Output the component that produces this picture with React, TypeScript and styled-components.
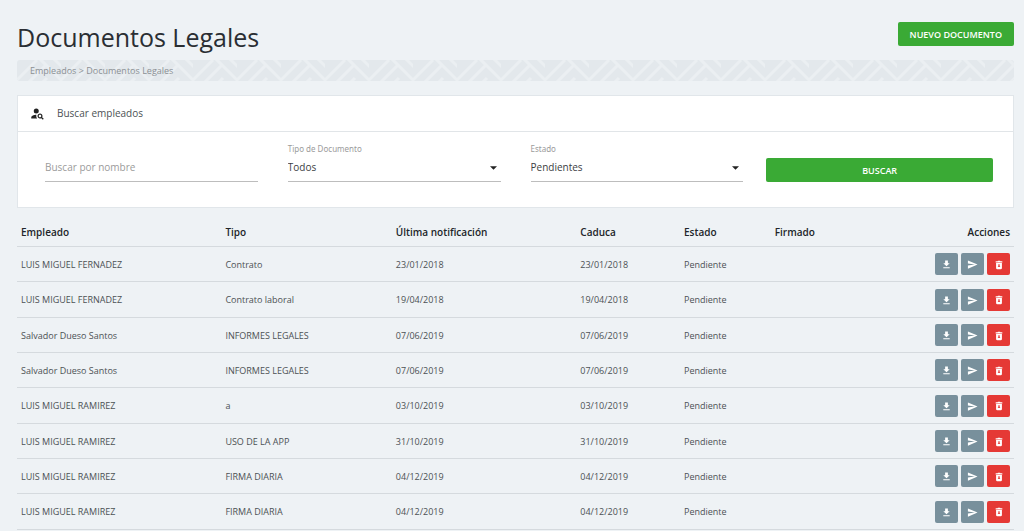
import React from "react";
import styled, { createGlobalStyle } from "styled-components";
import { MdDownload, MdSend, MdPersonSearch } from "react-icons/md";

const GlobalStyle = createGlobalStyle`
  *, *::before, *::after { box-sizing: border-box; }
  body {
    margin: 0;
    background: #eef2f5;
    color: #4c5154;
    font: 10px/15px "Segoe UI", "Open Sans", "Noto Sans", sans-serif;
    overflow-x: hidden;
  }
  button, input, select { font: inherit; color: inherit; }
`;

const Page = styled.main`
  padding: 22px 10px 0 17px;
`;

const PageHeader = styled.header`
  display: flex;
  justify-content: space-between;
  align-items: flex-start;
  height: 38px;
`;

const Title = styled.h1`
  margin: 0;
  color: #2a2e33;
  font-size: 25px;
  line-height: 30px;
  font-weight: 400;
`;

const PrimaryButton = styled.button<{ $wide?: boolean }>`
  height: 24px;
  width: ${(p) => (p.$wide ? "100%" : "auto")};
  padding: 0 12px;
  border: 0;
  border-radius: 2px;
  background: #3aaa35;
  color: #fff;
  font-size: 9px;
  font-weight: 600;
  cursor: pointer;
`;

const Breadcrumb = styled.nav`
  position: relative;
  height: 21px;
  border-radius: 3px;
  background: #e3e8ec;
  color: #8b9094;
  font-size: 9px;
  line-height: 21px;
  overflow: hidden;
`;

const Weave = styled.svg`
  position: absolute;
  inset: 0;
  width: 100%;
  height: 100%;
`;

const Trail = styled.div`
  position: relative;
  padding: 0 13px;
`;

const TrailLink = styled.a`
  color: inherit;
  text-decoration: none;
`;

const Card = styled.section`
  margin-top: 14px;
  background: #fff;
  border: 1px solid #e1e6ea;
`;

const CardHeader = styled.div`
  display: flex;
  align-items: center;
  gap: 12px;
  height: 36px;
  padding: 0 12px;
  border-bottom: 1px solid #e1e5e8;

  svg { color: #222; }
`;

const CardTitle = styled.h2`
  margin: 0;
  font-size: 10px;
  font-weight: 400;
`;

const Filters = styled.form`
  display: grid;
  grid-template-columns: repeat(4, 1fr);
  align-items: end;
  padding: 11px 12px 25px;
`;

const Field = styled.div`
  display: flex;
  flex-direction: column;
  padding: 0 15px;
`;

const FieldLabel = styled.label<{ $hidden?: boolean }>`
  color: #9b9b9b;
  font-family: "Segoe UI", "Noto Sans", sans-serif;
  font-size: 8px;
  line-height: 12px;
  visibility: ${(p) => (p.$hidden ? "hidden" : "visible")};
`;

const TextInput = styled.input`
  width: 100%;
  height: 27px;
  padding: 0 0 2px;
  border: 0;
  border-bottom: 1px solid #bdbdbd;
  background: transparent;
  outline: 0;

  &::placeholder { color: #9b9b9b; opacity: 1; }
`;

const SelectWrap = styled.div`
  display: grid;
  align-items: center;

  > * { grid-area: 1 / 1; }
  > svg { justify-self: end; margin: 0 4px 2px 0; pointer-events: none; }
`;

const Select = styled.select`
  width: 100%;
  height: 27px;
  padding: 0 0 2px;
  border: 0;
  border-bottom: 1px solid #bdbdbd;
  border-radius: 0;
  background: transparent;
  appearance: none;
  color: #3c4043;
`;

const SubmitCell = styled.div`
  display: flex;
  padding: 0 8px;
`;

const Table = styled.table`
  width: 100%;
  margin-top: 9px;
  border-collapse: collapse;
  table-layout: fixed;
`;

const Col = styled.col<{ $share: number }>`
  width: ${(p) => p.$share}%;
`;

const Row = styled.tr`
  height: 35px;
  font-size: 9px;
  &:nth-child(3n + 2) { height: 36px; }
`;

const Th = styled.th<{ $end?: boolean }>`
  height: 29px;
  padding: 2px 4px 0;
  border-bottom: 1px solid #d5dade;
  color: #212529;
  font-weight: 600;
  text-align: ${(p) => (p.$end ? "right" : "left")};
`;

const Td = styled.td`
  padding: 1px 4px 0;
  border-bottom: 1px solid #d5dade;
`;

const Actions = styled.div`
  display: flex;
  justify-content: flex-end;
  gap: 3px;
`;

const IconButton = styled.button<{ $danger?: boolean }>`
  display: flex;
  align-items: center;
  justify-content: center;
  flex: none;
  width: 23px;
  height: 22px;
  padding: 1px 0 0;
  border: 0;
  border-radius: 2px;
  background: ${(p) => (p.$danger ? "#e53935" : "#78909c")};
  color: #fff;
  cursor: pointer;
`;

const TrashIcon = () => (
  <svg width="10" height="10" viewBox="0 0 24 24" fill="currentColor" aria-hidden="true">
    <path
      fillRule="evenodd"
      d="M4 3h4.5l1-1h5l1 1H20v3H4zM5 7h14v12a3 3 0 0 1-3 3H8a3 3 0 0 1-3-3zm4 4l2 2-2 2 1 2 2-1 2 1 1-2-2-2 2-2z"
    />
  </svg>
);

const Caret = () => (
  <svg width="7" height="4" viewBox="0 0 8 4" aria-hidden="true">
    <path d="M0 0h8L4 4z" fill="#222" />
  </svg>
);

type Doc = [employee: string, kind: string, notified: string];

const docs: Doc[] = [
  ["LUIS MIGUEL FERNADEZ", "Contrato", "23/01/2018"],
  ["LUIS MIGUEL FERNADEZ", "Contrato laboral", "19/04/2018"],
  ["Salvador Dueso Santos", "INFORMES LEGALES", "07/06/2019"],
  ["Salvador Dueso Santos", "INFORMES LEGALES", "07/06/2019"],
  ["LUIS MIGUEL RAMIREZ", "a", "03/10/2019"],
  ["LUIS MIGUEL RAMIREZ", "USO DE LA APP", "31/10/2019"],
  ["LUIS MIGUEL RAMIREZ", "FIRMA DIARIA", "04/12/2019"],
  ["LUIS MIGUEL RAMIREZ", "FIRMA DIARIA", "04/12/2019"],
];

const headings = ["Empleado", "Tipo", "Última notificación", "Caduca", "Estado", "Firmado"];
const shares = [20.5, 17.1, 18.5, 10.4, 9.1, 12.2, 12.2];

export default function App() {
  return (
    <>
      <GlobalStyle />
      <Page>
        <PageHeader>
          <Title>Documentos Legales</Title>
          <PrimaryButton type="button">NUEVO DOCUMENTO</PrimaryButton>
        </PageHeader>

        <Breadcrumb aria-label="Ruta">
          <Weave aria-hidden="true">
            <defs>
              <pattern id="weave" width="44" height="44" viewBox="0 0 44 44" patternUnits="userSpaceOnUse">
                <path
                  d="M-2 22L20 0M6 28L28 6M14 34L30 18M22 -2L46 22M30 -8L52 14M-2 20L20 42M-8 28L8 44M36 28L52 44"
                  fill="none"
                  stroke="#ebeff2"
                  strokeWidth="3"
                />
              </pattern>
            </defs>
            <rect width="100%" height="100%" fill="url(#weave)" />
          </Weave>
          <Trail>
            <TrailLink href="#empleados">Empleados</TrailLink> &gt; Documentos Legales
          </Trail>
        </Breadcrumb>

        <Card>
          <CardHeader>
            <MdPersonSearch size={15} aria-hidden="true" />
            <CardTitle>Buscar empleados</CardTitle>
          </CardHeader>
          <Filters onSubmit={(e) => e.preventDefault()}>
            <Field>
              <FieldLabel htmlFor="nombre" $hidden>Nombre</FieldLabel>
              <TextInput id="nombre" placeholder="Buscar por nombre" />
            </Field>
            <Field>
              <FieldLabel htmlFor="tipo">Tipo de Documento</FieldLabel>
              <SelectWrap>
                <Select id="tipo"><option>Todos</option></Select>
                <Caret />
              </SelectWrap>
            </Field>
            <Field>
              <FieldLabel htmlFor="estado">Estado</FieldLabel>
              <SelectWrap>
                <Select id="estado"><option>Pendientes</option></Select>
                <Caret />
              </SelectWrap>
            </Field>
            <SubmitCell>
              <PrimaryButton type="submit" $wide>BUSCAR</PrimaryButton>
            </SubmitCell>
          </Filters>
        </Card>

        <Table>
          <colgroup>
            {shares.map((s, i) => <Col key={i} $share={s} />)}
          </colgroup>
          <thead>
            <tr>
              {headings.map((h) => <Th key={h} scope="col">{h}</Th>)}
              <Th scope="col" $end>Acciones</Th>
            </tr>
          </thead>
          <tbody>
            {docs.map(([employee, kind, date], i) => (
              <Row key={i}>
                <Td>{employee}</Td>
                <Td>{kind}</Td>
                <Td>{date}</Td>
                <Td>{date}</Td>
                <Td>Pendiente</Td>
                <Td />
                <Td>
                  <Actions>
                    <IconButton type="button" aria-label="Descargar"><MdDownload size={11} /></IconButton>
                    <IconButton type="button" aria-label="Enviar"><MdSend size={11} /></IconButton>
                    <IconButton type="button" aria-label="Eliminar" $danger><TrashIcon /></IconButton>
                  </Actions>
                </Td>
              </Row>
            ))}
          </tbody>
        </Table>
      </Page>
    </>
  );
}
